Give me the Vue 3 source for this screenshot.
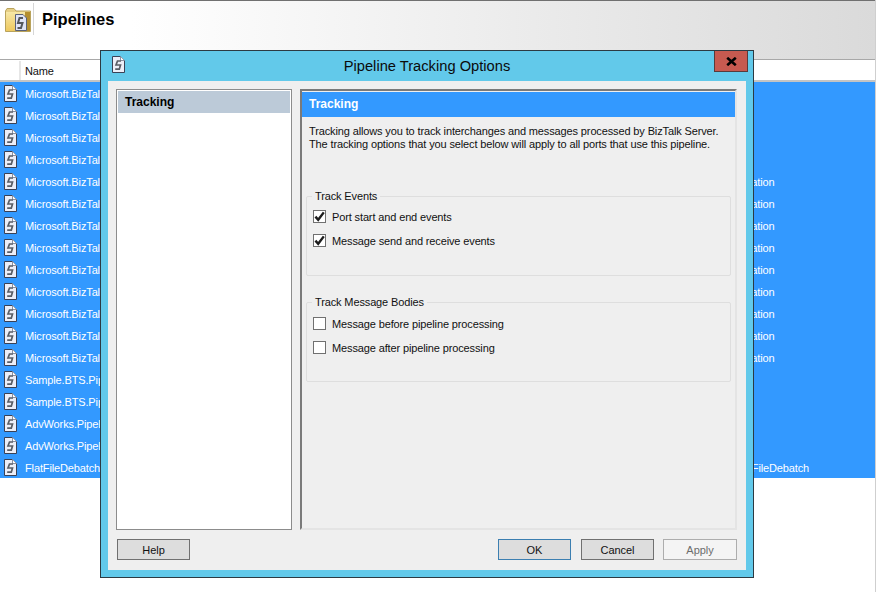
<script setup>
const names = [
  ...Array(13).fill('Microsoft.BizTalk.DefaultPipelines'),
  'Sample.BTS.Pipelines.Receive',
  'Sample.BTS.Pipelines.Send',
  'AdvWorks.Pipelines.Receive',
  'AdvWorks.Pipelines.Send',
  'FlatFileDebatch',
]
const rows = names.map((name, i) => ({
  name,
  other: i === 17 ? 'FlatFileDebatch' : i >= 4 && i <= 12 ? 'Location' : '',
}))
const groups = [
  {
    title: 'Track Events',
    items: [
      { label: 'Port start and end events', on: true },
      { label: 'Message send and receive events', on: true },
    ],
  },
  {
    title: 'Track Message Bodies',
    items: [
      { label: 'Message before pipeline processing', on: false },
      { label: 'Message after pipeline processing', on: false },
    ],
  },
]
</script>

<template>
  <div class="page">
    <div class="main">
      <header class="head">
        <svg class="folder" width="26" height="26" viewBox="0 0 26 26">
          <defs>
            <linearGradient id="fold" x1="0" y1="0" x2="0" y2="1">
              <stop offset="0" stop-color="#f7e7a6"/>
              <stop offset="1" stop-color="#eec95f"/>
            </linearGradient>
          </defs>
          <path d="M0.5 4 L2 1.5 H9 L11 4 H25.5 V24.5 H0.5Z" fill="#e6cf86" stroke="#b9a35c"/>
          <rect x="1" y="5" width="19" height="19" fill="url(#fold)"/>
          <rect x="20" y="5" width="5" height="19" fill="#b48e2e"/>
          <path d="M10.5 7.5 H18 L21.5 11 V23.5 H10.5Z" fill="#dfe3f5" stroke="#5a6178"/>
          <path d="M18 11 H14.5 L13 16 H17.5 L16 21 H12.5" fill="none" stroke="#53565c" stroke-width="2"/>
        </svg>
        <div class="head-sep"></div>
        <h1>Pipelines</h1>
      </header>

      <div class="grid-head">
        <div class="corner"></div>
        <div class="col-name">Name</div>
      </div>
      <div v-for="(r, i) in rows" :key="i" class="row">
        <svg class="doc" width="13" height="17" viewBox="0 0 13 17">
          <path d="M0.5 0.5 H8.5 L12.5 4.5 V16.5 H0.5Z" fill="#eceef8" stroke="#3a4156"/>
          <path d="M8.5 0.5 V4.5 H12.5" fill="#ffffff" stroke="#8a90a2"/>
          <path d="M9 5 H5.5 L4 9 H8.5 L7.3 13.2 H3.2" fill="none" stroke="#5a5e66" stroke-width="1.7"/>
        </svg>
        <div class="cell-name"><span class="name-clip">{{ r.name }}</span></div>
        <div class="cell-other">{{ r.other }}</div>
      </div>
    </div>

    <section class="dialog">
      <div class="titlebar">
        <svg class="title-doc" width="13" height="17" viewBox="0 0 13 17">
          <path d="M0.5 0.5 H8.5 L12.5 4.5 V16.5 H0.5Z" fill="#eceef8" stroke="#3a4156"/>
          <path d="M8.5 0.5 V4.5 H12.5" fill="#ffffff" stroke="#8a90a2"/>
          <path d="M9 5 H5.5 L4 9 H8.5 L7.3 13.2 H3.2" fill="none" stroke="#5a5e66" stroke-width="1.7"/>
        </svg>
        <div class="title">Pipeline Tracking Options</div>
        <button class="close" aria-label="Close">
          <svg width="11" height="9" viewBox="0 0 11 9">
            <path d="M1.2 0.8 L9.8 8.2 M9.8 0.8 L1.2 8.2" stroke="#000" stroke-width="2.6" fill="none"/>
          </svg>
        </button>
      </div>
      <div class="panel">
        <div class="content">
          <nav class="side">
            <div class="side-item">Tracking</div>
          </nav>
          <main class="pane">
            <div class="pane-head">Tracking</div>
            <p class="desc">Tracking allows you to track interchanges and messages processed by BizTalk Server.<br>The tracking options that you select below will apply to all ports that use this pipeline.</p>
            <fieldset v-for="g in groups" :key="g.title" class="group">
              <legend>{{ g.title }}</legend>
              <label v-for="it in g.items" :key="it.label" class="check">
                <span class="box">
                  <svg v-if="it.on" width="11" height="11" viewBox="0 0 11 11">
                    <path d="M1.4 5.6 L4.2 8.8 L9.8 1.4" stroke="#1c1c1c" stroke-width="2.4" fill="none"/>
                  </svg>
                </span>
                {{ it.label }}
              </label>
            </fieldset>
          </main>
        </div>
        <footer class="foot">
          <button class="btn">Help</button>
          <div class="foot-right">
            <button class="btn ok">OK</button>
            <button class="btn">Cancel</button>
            <button class="btn apply">Apply</button>
          </div>
        </footer>
      </div>
    </section>
  </div>
</template>

<style>
html, body { margin: 0; background: #fff; }
</style>

<style scoped>
.page {
  position: relative;
  width: 881px;
  height: 592px;
  overflow: hidden;
  background: #fff;
  font-family: "Liberation Sans", Arial, sans-serif;
  font-size: 11px;
  letter-spacing: -0.13px;
  color: #111;
}
.main {
  box-sizing: border-box;
  width: 876px;
  height: 592px;
  border-right: 1px solid #cfcfcf;
}
.head {
  box-sizing: border-box;
  height: 60px;
  display: flex;
  align-items: flex-start;
  background: linear-gradient(90deg, #fff 0%, #fff 15%, #dadada 100%);
  border-top: 1px solid #707070;
  border-bottom: 1px solid #a8a8a8;
}
.folder { margin: 6px 0 0 5px; flex: none; }
.head-sep { width: 1px; height: 32px; margin: 2px 0 0 2px; background: #d6d6d6; }
.head h1 {
  margin: 8px 0 0 8px;
  font-size: 16.5px;
  line-height: 20px;
  letter-spacing: 0;
  font-weight: bold;
  color: #000;
}
.grid-head {
  box-sizing: border-box;
  height: 22px;
  display: flex;
  background: #fff;
  padding: 1px 0 0 2px;
  border-bottom: 2px solid #c4c4c4;
}
.corner { width: 17px; border-right: 2px solid #e6e6e6; }
.col-name { padding: 3px 0 0 4px; line-height: 15px; }
.row {
  height: 22px;
  display: flex;
  align-items: center;
  background: #3399ff;
  color: #fff;
}
.doc { margin-left: 4px; flex: none; }
.cell-name {
  width: 717px;
  padding: 2px 0 0 8px;
  box-sizing: border-box;
  white-space: nowrap;
  flex: none;
}
.name-clip { display: block; width: 75px; overflow: hidden; }
.cell-other { white-space: nowrap; padding-top: 2px; }
.dialog {
  position: absolute;
  left: 100px;
  top: 50px;
  box-sizing: border-box;
  width: 654px;
  height: 528px;
  background: #62c9ea;
  border: 1px solid #2c3a42;
  padding: 0 7px 7px;
  display: flex;
  flex-direction: column;
}
.titlebar {
  height: 30px;
  flex: none;
  position: relative;
}
.title-doc { position: absolute; left: 4px; top: 5px; }
.title {
  text-align: center;
  font-size: 14.7px;
  letter-spacing: 0;
  line-height: 17px;
  padding-top: 7px;
  color: #0b0b0b;
}
.close {
  position: absolute;
  right: -2px;
  top: 0;
  box-sizing: border-box;
  width: 34px;
  height: 21px;
  background: #c75a50;
  border: 1px solid #5a3a3a;
  border-top: none;
  padding: 0;
  display: flex;
  align-items: center;
  justify-content: center;
}
.panel {
  flex: 1;
  background: #efefef;
  box-sizing: border-box;
  padding: 8px 8px 10px;
  display: flex;
  flex-direction: column;
}
.content { display: flex; gap: 8px; height: 441px; }
.side {
  box-sizing: border-box;
  width: 176px;
  background: #fff;
  border: 1px solid #8c8c8c;
  padding: 1px;
}
.side-item {
  height: 22px;
  line-height: 22px;
  padding-left: 7px;
  background: #bccad8;
  font-weight: bold;
  font-size: 12px;
  letter-spacing: 0;
  color: #000;
}
.pane {
  box-sizing: border-box;
  width: 437px;
  border-style: solid;
  border-width: 2px;
  border-color: #7a7a7a #e4e4e4 #e4e4e4 #7a7a7a;
  padding: 1px 0 0;
}
.pane-head {
  height: 25px;
  line-height: 25px;
  background: #3399ff;
  color: #fff;
  font-weight: bold;
  font-size: 12px;
  letter-spacing: 0;
  padding-left: 7px;
}
.desc {
  margin: 8px 0 0 7px;
  line-height: 13px;
  color: #111;
  white-space: nowrap;
}
.group {
  box-sizing: border-box;
  margin: 0 4px 0;
  padding: 0 0 0 6px;
  height: 86px;
  border: 1px solid #dedede;
  border-radius: 2px;
}
.group:first-of-type { margin-top: 39px; }
.group + .group { margin-top: 20px; }
.group legend {
  margin-left: -1px;
  padding: 0 3px;
  line-height: 13px;
}
.check {
  display: flex;
  align-items: center;
  height: 13px;
  margin-bottom: 11px;
  color: #111;
  position: relative;
  top: 7px;
}
.group + .group .check { top: 8px; }
.box {
  box-sizing: border-box;
  width: 13px;
  height: 13px;
  border: 1px solid #707070;
  background: #fff;
  margin-right: 6px;
  display: flex;
  align-items: center;
  justify-content: center;
  flex: none;
}
.foot { display: flex; justify-content: space-between; margin-top: 9px; padding: 0 1px; }
.foot-right { display: flex; gap: 10px; }
.btn {
  box-sizing: border-box;
  width: 73px;
  height: 21px;
  padding: 0;
  background: #dddddd;
  border: 1px solid #707070;
  font: 11px "Liberation Sans", Arial, sans-serif;
  letter-spacing: -0.05px;
  color: #111;
}
.btn.ok { border-color: #3c7fb1; }
.btn.apply { width: 74px; background: #f4f4f4; border-color: #adadad; color: #6d6d6d; margin-left: -1px; }
</style>
